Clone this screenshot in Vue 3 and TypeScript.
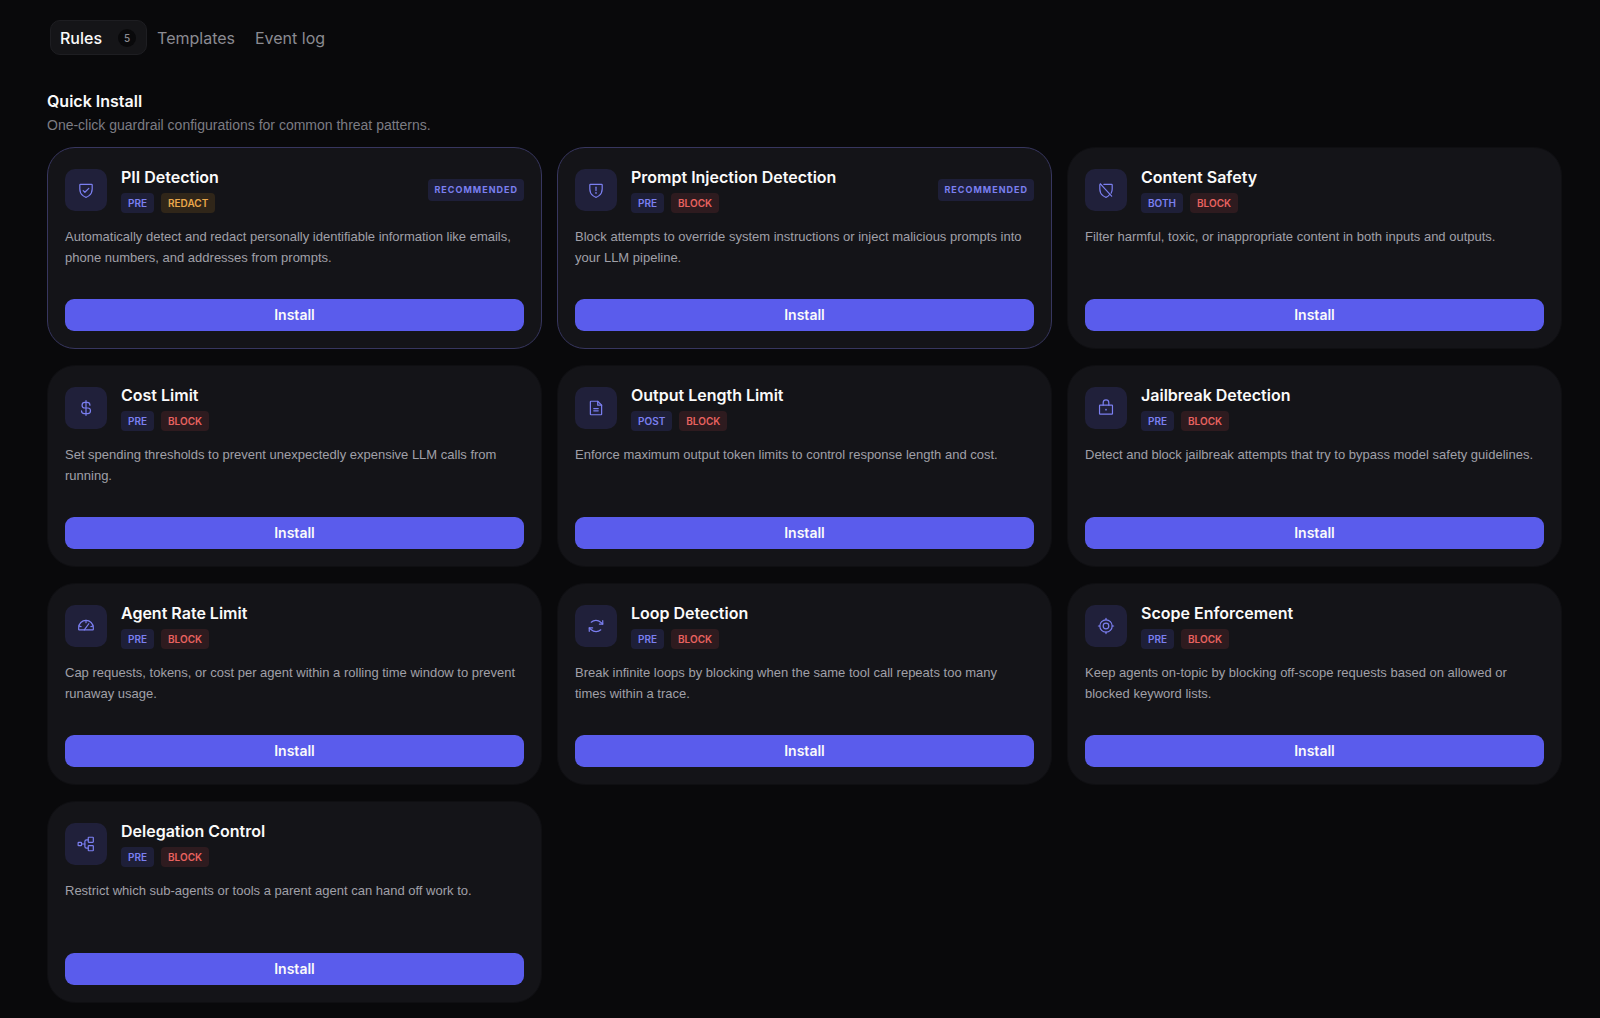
<script setup lang="ts">
import { ref } from 'vue'

type Stage = 'PRE' | 'POST' | 'BOTH'
type Action = 'BLOCK' | 'REDACT'
type IconName =
  | 'shieldCheck'
  | 'shieldWarning'
  | 'shieldSlash'
  | 'dollar'
  | 'file'
  | 'lock'
  | 'gauge'
  | 'loop'
  | 'crosshair'
  | 'tree'

interface Guardrail {
  title: string
  icon: IconName
  stage: Stage
  action: Action
  text: string
  recommended?: boolean
}

const tabs: { label: string; count?: number }[] = [
  { label: 'Rules', count: 5 },
  { label: 'Templates' },
  { label: 'Event log' },
]
const active = ref('Rules')

const icons: Record<IconName, { lines: string[]; dots?: [number, number, number][] }> = {
  shieldCheck: {
    lines: [
      'M216,112V56a8,8,0,0,0-8-8H48a8,8,0,0,0-8,8v56c0,96,88,120,88,120S216,208,216,112Z',
      'M88,136l24,24,56-56',
    ],
  },
  shieldWarning: {
    lines: [
      'M216,112V56a8,8,0,0,0-8-8H48a8,8,0,0,0-8,8v56c0,96,88,120,88,120S216,208,216,112Z',
      'M128,88v48',
    ],
    dots: [[128, 170, 12]],
  },
  shieldSlash: {
    lines: [
      'M48,40,208,216',
      'M98,48H208a8,8,0,0,1,8,8v56c0,26-6,46-15,62',
      'M180,192c-24,31-52,40-52,40S40,208,40,112V56a8,8,0,0,1,8-8h7',
    ],
  },
  dollar: {
    lines: [
      'M128,24V232',
      'M184,88a40,40,0,0,0-40-40H112a40,40,0,0,0,0,80h40a40,40,0,0,1,0,80H104a40,40,0,0,1-40-40',
    ],
  },
  file: {
    lines: [
      'M200,224H56a8,8,0,0,1-8-8V40a8,8,0,0,1,8-8h96l56,56V216A8,8,0,0,1,200,224Z',
      'M152,32V88h56',
      'M96,136h64',
      'M96,168h64',
    ],
  },
  lock: {
    lines: [
      'M44,88H212a8,8,0,0,1,8,8V208a8,8,0,0,1-8,8H44a8,8,0,0,1-8-8V96A8,8,0,0,1,44,88Z',
      'M88,88V52a40,40,0,0,1,80,0V88',
    ],
    dots: [[128, 152, 12]],
  },
  gauge: {
    lines: [
      'M24,176V153C24,95,70,48,127,48a104,104,0,0,1,105,104v24a8,8,0,0,1-8,8H32A8,8,0,0,1,24,176Z',
      'M104,184l64-88',
      'M128,48V80',
      'M28,128l30,8',
      'M228,128l-30,8',
    ],
  },
  loop: {
    lines: [
      'M176,100h48V52',
      'M224,100l-29-25a96,96,0,0,0-135-1',
      'M80,156H32v48',
      'M32,156l29,25a96,96,0,0,0,135,1',
    ],
  },
  crosshair: {
    lines: [
      'M216,128A88,88,0,1,1,40,128A88,88,0,1,1,216,128Z',
      'M168,128A40,40,0,1,1,88,128A40,40,0,1,1,168,128Z',
      'M128,20V40',
      'M128,216v20',
      'M20,128H40',
      'M216,128h20',
    ],
  },
  tree: {
    lines: [
      'M24,104H56a8,8,0,0,1,8,8v32a8,8,0,0,1-8,8H24a8,8,0,0,1-8-8V112A8,8,0,0,1,24,104Z',
      'M168,32h56a8,8,0,0,1,8,8v56a8,8,0,0,1-8,8H168a8,8,0,0,1-8-8V40A8,8,0,0,1,168,32Z',
      'M168,152h56a8,8,0,0,1,8,8v56a8,8,0,0,1-8,8H168a8,8,0,0,1-8-8V160A8,8,0,0,1,168,152Z',
      'M64,128h48',
      'M160,188H136a24,24,0,0,1-24-24V92a24,24,0,0,1,24-24h24',
    ],
  },
}

const guardrails: Guardrail[] = [
  {
    title: 'PII Detection',
    icon: 'shieldCheck',
    stage: 'PRE',
    action: 'REDACT',
    recommended: true,
    text: 'Automatically detect and redact personally identifiable information like emails, phone numbers, and addresses from prompts.',
  },
  {
    title: 'Prompt Injection Detection',
    icon: 'shieldWarning',
    stage: 'PRE',
    action: 'BLOCK',
    recommended: true,
    text: 'Block attempts to override system instructions or inject malicious prompts into your LLM pipeline.',
  },
  {
    title: 'Content Safety',
    icon: 'shieldSlash',
    stage: 'BOTH',
    action: 'BLOCK',
    text: 'Filter harmful, toxic, or inappropriate content in both inputs and outputs.',
  },
  {
    title: 'Cost Limit',
    icon: 'dollar',
    stage: 'PRE',
    action: 'BLOCK',
    text: 'Set spending thresholds to prevent unexpectedly expensive LLM calls from running.',
  },
  {
    title: 'Output Length Limit',
    icon: 'file',
    stage: 'POST',
    action: 'BLOCK',
    text: 'Enforce maximum output token limits to control response length and cost.',
  },
  {
    title: 'Jailbreak Detection',
    icon: 'lock',
    stage: 'PRE',
    action: 'BLOCK',
    text: 'Detect and block jailbreak attempts that try to bypass model safety guidelines.',
  },
  {
    title: 'Agent Rate Limit',
    icon: 'gauge',
    stage: 'PRE',
    action: 'BLOCK',
    text: 'Cap requests, tokens, or cost per agent within a rolling time window to prevent runaway usage.',
  },
  {
    title: 'Loop Detection',
    icon: 'loop',
    stage: 'PRE',
    action: 'BLOCK',
    text: 'Break infinite loops by blocking when the same tool call repeats too many times within a trace.',
  },
  {
    title: 'Scope Enforcement',
    icon: 'crosshair',
    stage: 'PRE',
    action: 'BLOCK',
    text: 'Keep agents on-topic by blocking off-scope requests based on allowed or blocked keyword lists.',
  },
  {
    title: 'Delegation Control',
    icon: 'tree',
    stage: 'PRE',
    action: 'BLOCK',
    text: 'Restrict which sub-agents or tools a parent agent can hand off work to.',
  },
]
</script>

<template>
  <main class="page">
    <nav class="tabs" role="tablist">
      <button
        v-for="tab in tabs"
        :key="tab.label"
        type="button"
        role="tab"
        class="tab"
        :class="{ active: active === tab.label }"
        :aria-selected="active === tab.label"
        @click="active = tab.label"
      >
        {{ tab.label }}
        <span v-if="tab.count" class="count">{{ tab.count }}</span>
      </button>
    </nav>

    <header class="intro">
      <h1>Quick Install</h1>
      <p>One-click guardrail configurations for common threat patterns.</p>
    </header>

    <section class="grid">
      <article
        v-for="rule in guardrails"
        :key="rule.title"
        class="card"
        :class="{ featured: rule.recommended }"
      >
        <div class="head">
          <div class="icon">
            <svg viewBox="0 0 256 256" aria-hidden="true">
              <path v-for="d in icons[rule.icon].lines" :key="d" :d="d" />
              <circle
                v-for="dot in icons[rule.icon].dots"
                :key="dot[1]"
                :cx="dot[0]"
                :cy="dot[1]"
                :r="dot[2]"
              />
            </svg>
          </div>
          <div class="name">
            <h2>{{ rule.title }}</h2>
            <div class="badges">
              <span class="badge">{{ rule.stage }}</span>
              <span class="badge" :class="rule.action.toLowerCase()">{{ rule.action }}</span>
            </div>
          </div>
          <span v-if="rule.recommended" class="recommended">RECOMMENDED</span>
        </div>
        <p class="text">{{ rule.text }}</p>
        <button type="button" class="install">Install</button>
      </article>
    </section>
  </main>
</template>

<style>
body {
  margin: 0;
  background: #09090b;
}
</style>

<style scoped>
.page {
  padding: 20px 38px 15px 47px;
  font-family: Inter, 'Liberation Sans', sans-serif;
  color: #fafafa;
}

h1,
h2,
p {
  margin: 0;
}

button {
  font-family: inherit;
  cursor: pointer;
}

.tabs {
  display: flex;
  padding-left: 3px;
}

.tab {
  display: flex;
  align-items: center;
  gap: 16px;
  height: 35px;
  padding: 0 9px;
  border: 1px solid transparent;
  border-radius: 10px;
  background: transparent;
  color: #8b8b92;
  font-size: 16px;
  font-weight: 400;
}

.tab.active {
  padding-right: 10px;
  border-color: #1e1e22;
  background: #151518;
  color: #fafafa;
  font-weight: 500;
}

.count {
  width: 18px;
  border-radius: 9px;
  background: #09090b;
  color: #8b8b92;
  font-size: 10px;
  font-weight: 500;
  line-height: 18px;
  text-align: center;
}

.intro {
  padding: 34px 0 10px;
}

h1 {
  font-size: 16px;
  font-weight: 600;
  line-height: 24px;
}

.intro p {
  color: #7c7c83;
  font-family: 'Liberation Sans', Arial, sans-serif;
  font-size: 14px;
  line-height: 24px;
}

.grid {
  display: grid;
  grid-template-columns: repeat(3, minmax(0, 1fr));
  gap: 16px 15px;
}

.card {
  display: flex;
  flex-direction: column;
  padding: 19px 17px 17px;
  border: 1px solid #0f0f12;
  border-radius: 28px;
  background: #141418;
}

.card.featured {
  border-color: #37365f;
}

.head {
  display: flex;
  align-items: center;
  gap: 14px;
}

.icon {
  display: grid;
  flex: none;
  place-items: center;
  width: 42px;
  height: 42px;
  border-radius: 10px;
  background: #20203a;
}

.icon svg {
  width: 18px;
  height: 18px;
  fill: none;
  stroke: #7b7ff0;
  stroke-width: 17;
  stroke-linecap: round;
  stroke-linejoin: round;
}

.icon circle {
  fill: #7b7ff0;
  stroke: none;
}

.name {
  flex: 1;
}

h2 {
  font-size: 16px;
  font-weight: 600;
  line-height: 20px;
}

.badges {
  display: flex;
  gap: 7px;
  margin-top: 6px;
}

.badge,
.recommended {
  padding: 0 7px;
  border-radius: 4px;
  background: #1e1f38;
  color: #7b7ff0;
  font-size: 10px;
  font-weight: 600;
  line-height: 20px;
}

.badge.block {
  background: #2e1b1f;
  color: #e8625f;
}

.badge.redact {
  background: #302619;
  color: #eaa84b;
}

.recommended {
  padding: 0 6px;
  font-size: 9px;
  font-weight: 700;
  letter-spacing: 1px;
  line-height: 22px;
}

.text {
  flex: 1;
  min-height: 42px;
  margin: 13px 0 31px;
  padding-right: 6px;
  color: #a0a0a8;
  font-family: 'Liberation Sans', Arial, sans-serif;
  font-size: 13px;
  line-height: 21px;
}

.install {
  height: 32px;
  padding: 0 0 2px;
  border: 0;
  border-radius: 9px;
  background: #5a5cec;
  color: #fafafa;
  font-size: 14px;
  font-weight: 600;
}
</style>
